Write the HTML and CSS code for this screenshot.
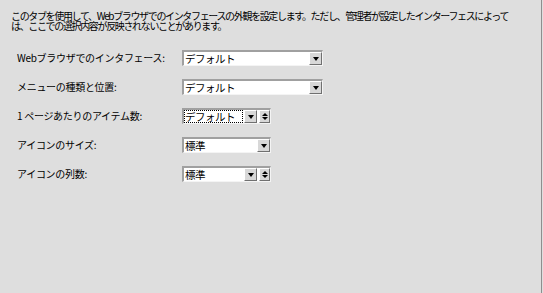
FILE: index.html
```html
<!DOCTYPE html>
<html lang="ja">
<head>
  <meta charset="UTF-8">
  <title>インタフェース設定</title>
  <link rel="stylesheet" href="styles.css">
</head>
<body>
  <div class="panel">
    <p class="intro">このタブを使用して、Webブラウザでのインタフェースの外観を設定します。ただし、管理者が設定したインターフェスによって<br>は、ここでの選択内容が反映されないことがあります。</p>

    <div class="form">
      <div class="label">Webブラウザでのインタフェース:</div>
      <div class="combo wide">
        <div class="field">デフォルト</div>
        <div class="btn"><span class="down"></span></div>
      </div>

      <div class="label">メニューの種類と位置:</div>
      <div class="combo wide">
        <div class="field">デフォルト</div>
        <div class="btn"><span class="down"></span></div>
      </div>

      <div class="label">1 ページあたりのアイテム数:</div>
      <div class="combo narrow">
        <div class="field focus">デフォルト</div>
        <div class="btn"><span class="down"></span></div>
        <div class="btn spin"><span class="up"></span><span class="down"></span></div>
      </div>

      <div class="label">アイコンのサイズ:</div>
      <div class="combo narrow">
        <div class="field">標準</div>
        <div class="btn"><span class="down"></span></div>
      </div>

      <div class="label">アイコンの列数:</div>
      <div class="combo narrow">
        <div class="field">標準</div>
        <div class="btn"><span class="down"></span></div>
        <div class="btn spin"><span class="up"></span><span class="down"></span></div>
      </div>
    </div>
  </div>
</body>
</html>
```

FILE: styles.css
```css
body {
  margin: 0;
  background: #dedede;
  color: #000;
  font-family: "Noto Sans CJK JP", "DejaVu Sans", sans-serif;
  font-size: 10px;
}

.panel {
  width: 542px;
  height: 293px;
  box-sizing: border-box;
  border-right: 1px solid #8e8e8e;
}

.intro {
  margin: 0;
  padding: 11px 0 0 11px;
  line-height: 10px;
  letter-spacing: -1.35px;
}

.form {
  display: grid;
  grid-template-columns: 165px auto;
  row-gap: 13px;
  margin: 19px 0 0 17px;
  align-items: center;
}

.label {
  line-height: 16px;
  letter-spacing: -0.3px;
}

.combo {
  display: flex;
  height: 16px;
  box-sizing: border-box;
  background: #fff;
  border-top: 2px solid #a0a0a0;
  border-left: 2px solid #a0a0a0;
  border-right: 1px solid #f4f4f4;
  border-bottom: 1px solid #f4f4f4;
  font-size: 10.5px;
}

.wide { width: 141px; }
.narrow { width: 89px; }

.field {
  flex: 1;
  line-height: 13px;
  padding-left: 1px;
  white-space: nowrap;
  letter-spacing: -0.5px;
}

.focus {
  outline: 1px dotted #000;
  outline-offset: -1px;
}

.btn {
  width: 11px;
  margin-left: 1px;
  background: #d8d8d8;
  border-top: 1px solid #fff;
  border-left: 1px solid #fff;
  border-right: 1px solid #707070;
  border-bottom: 1px solid #707070;
  display: flex;
  flex-direction: column;
  align-items: center;
  justify-content: center;
  gap: 1px;
}

.spin {
  width: 9px;
  margin-left: 2px;
}

.down {
  width: 0;
  height: 0;
  border-left: 3px solid transparent;
  border-right: 3px solid transparent;
  border-top: 4px solid #000;
}

.spin .down { border-top-width: 3px; }

.up {
  width: 0;
  height: 0;
  border-left: 3px solid transparent;
  border-right: 3px solid transparent;
  border-bottom: 3px solid #000;
}
```
